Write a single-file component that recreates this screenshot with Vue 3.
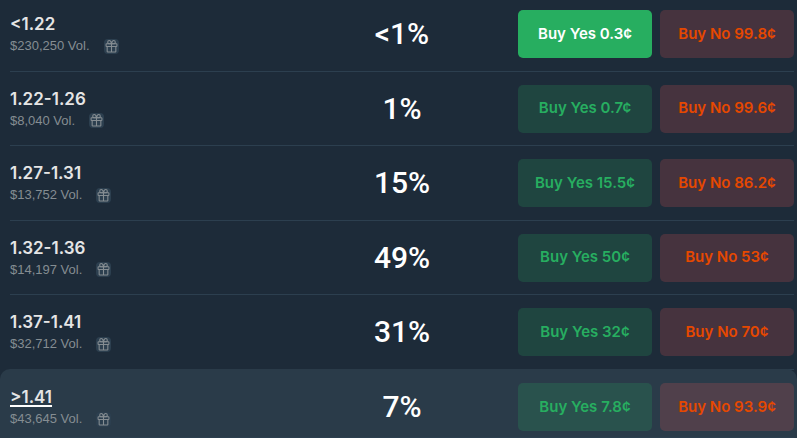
<script setup>
const outcomes = [
  { name: '<1.22', volume: '$230,250 Vol.', chance: '<1%', yes: '0.3¢', no: '99.8¢', selected: true },
  { name: '1.22-1.26', volume: '$8,040 Vol.', chance: '1%', yes: '0.7¢', no: '99.6¢' },
  { name: '1.27-1.31', volume: '$13,752 Vol.', chance: '15%', yes: '15.5¢', no: '86.2¢' },
  { name: '1.32-1.36', volume: '$14,197 Vol.', chance: '49%', yes: '50¢', no: '53¢' },
  { name: '1.37-1.41', volume: '$32,712 Vol.', chance: '31%', yes: '32¢', no: '70¢' },
  { name: '>1.41', volume: '$43,645 Vol.', chance: '7%', yes: '7.8¢', no: '93.9¢', active: true },
]
</script>

<template>
  <ul class="outcomes">
    <li v-for="o in outcomes" :key="o.name" class="row" :class="{ active: o.active }">
      <div class="inner">
        <div class="info">
          <a href="#" class="name">{{ o.name }}</a>
          <div class="meta">
            <span>{{ o.volume }}</span>
            <button type="button" class="gift" aria-label="Rewards">
              <svg viewBox="0 0 24 24" width="13" height="13" fill="none" stroke="currentColor" stroke-width="2" stroke-linejoin="round" stroke-linecap="round">
                <rect x="2" y="7" width="20" height="5" rx="1" />
                <path d="M4 12v9a1 1 0 0 0 1 1h14a1 1 0 0 0 1-1v-9M12 7v15M12 7H8a3 3 0 0 1 0-6c3 0 4 6 4 6zM12 7h4a3 3 0 0 0 0-6c-3 0-4 6-4 6z" />
              </svg>
            </button>
          </div>
        </div>
        <div class="chance">{{ o.chance }}</div>
        <div class="actions">
          <button type="button" class="buy yes" :class="{ selected: o.selected }">Buy Yes {{ o.yes }}</button>
          <button type="button" class="buy no">Buy No {{ o.no }}</button>
        </div>
      </div>
    </li>
  </ul>
</template>

<style>
body {
  background: #1d2b39;
}
</style>

<style scoped>
.outcomes {
  margin: 0;
  padding: 0;
  list-style: none;
  font-family: Inter, "Liberation Sans", sans-serif;
}
.row {
  padding: 0 3px 0 10px;
}
.inner {
  box-sizing: border-box;
  min-height: 74px;
  display: grid;
  grid-template-columns: minmax(0, 1fr) 160px minmax(0, 1fr);
  align-items: center;
  border-bottom: 1px solid #2c3f4f;
}
.row:nth-child(odd) .inner {
  min-height: 75px;
}
.row:first-child .inner {
  min-height: 72px;
  padding: 10px 0 13px;
}
.row.active {
  margin-top: -1px;
  background: #2a3b49;
  border-radius: 10px 10px 0 0;
}
.row.active .inner {
  min-height: 0;
  padding: 14px 0 6px;
}
.info {
  display: flex;
  flex-direction: column;
  align-items: flex-start;
}
.name {
  color: #e5e5e5;
  font-size: 17px;
  font-weight: 600;
  line-height: 24px;
  text-decoration: none;
}
.active .name {
  text-decoration: underline;
  text-decoration-color: #fff;
  text-decoration-thickness: 2px;
  text-underline-offset: 2px;
}
.meta {
  display: flex;
  align-items: center;
  gap: 14px;
  color: #858d92;
  font-family: "Liberation Sans", Arial, sans-serif;
  font-size: 13px;
  line-height: 20px;
}
.gift {
  display: flex;
  align-items: center;
  justify-content: center;
  width: 15px;
  height: 15px;
  padding: 0;
  border: 0;
  border-radius: 4px;
  background: #2c3f4f;
  color: #858d92;
}
.chance {
  color: #fff;
  font-family: Roboto, sans-serif;
  font-size: 30px;
  font-weight: 500;
  line-height: 36px;
  text-align: center;
}
.actions {
  display: flex;
  justify-content: flex-end;
  gap: 8px;
}
.buy {
  width: 134px;
  height: 48px;
  padding: 0 0 2px;
  border: 0;
  border-radius: 5px;
  font-family: inherit;
  font-size: 15px;
  font-weight: 600;
  white-space: nowrap;
}
.yes {
  background: rgba(39, 174, 96, 0.2);
  color: #27ae60;
}
.yes.selected {
  background: #27ae60;
  color: #fff;
}
.no {
  background: rgba(235, 87, 87, 0.2);
  color: #e64800;
}
</style>
